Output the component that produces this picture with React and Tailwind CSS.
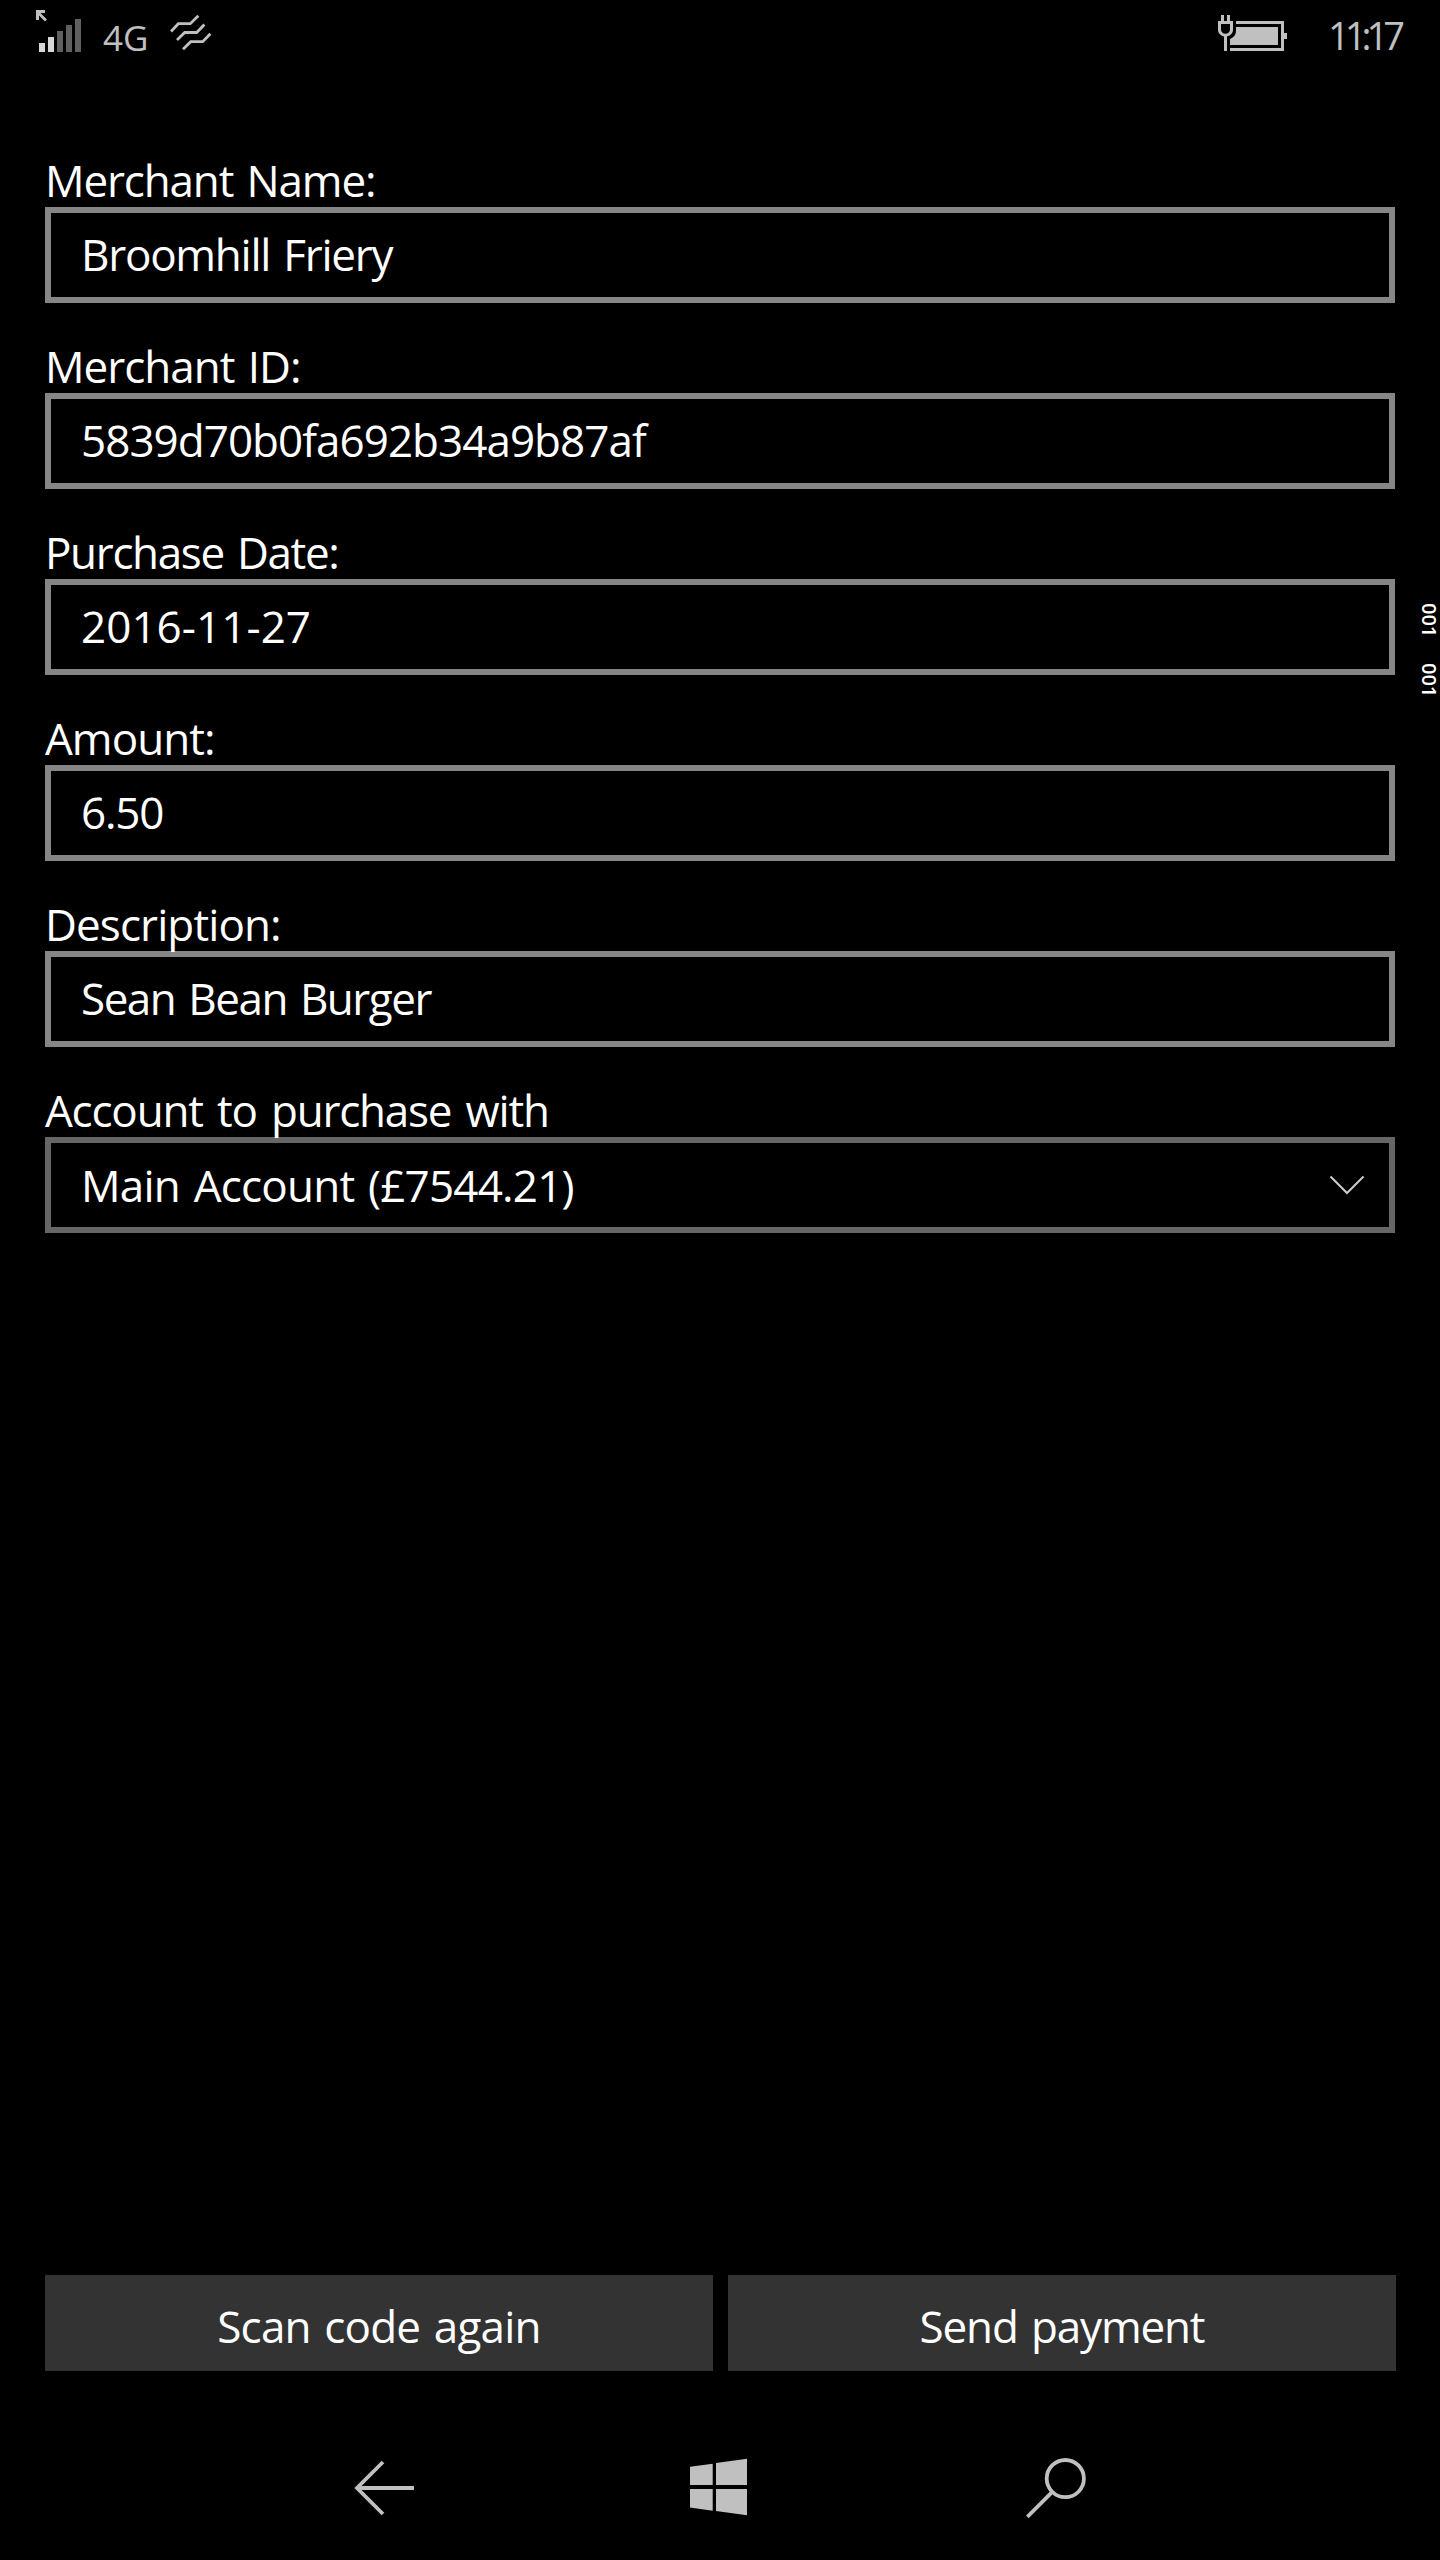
import React, { useState } from "react";

const initialFields = [
  {
    label: "Merchant Name:",
    value: "Broomhill Friery",
    labelClass: "tracking-[-1.15px]",
    valueClass: "tracking-[-1.25px]",
  },
  {
    label: "Merchant ID:",
    value: "5839d70b0fa692b34a9b87af",
    labelClass: "tracking-[-1.01px]",
    valueClass: "tracking-[-0.97px]",
  },
  {
    label: "Purchase Date:",
    value: "2016-11-27",
    labelClass: "tracking-[-1.35px]",
    valueClass: "tracking-[0.05px]",
  },
  {
    label: "Amount:",
    value: "6.50",
    labelClass: "tracking-[-0.95px]",
    valueClass: "tracking-[-1.2px]",
  },
  {
    label: "Description:",
    value: "Sean Bean Burger",
    labelClass: "tracking-[-0.9px]",
    valueClass: "tracking-[-1.48px]",
  },
];

const SignalIcon = () => (
  <svg width="46" height="44" viewBox="36 9 46 44">
    <path d="M36 10h9v3h-4.500l6.500 6.500-2 2-6-6V20h-3z" fill="#c0c0c0" />
    <path d="M39 43h6v9h-6zM48 37h6v15h-6z" fill="#d8d8d8" />
    <path d="M57 31h6v21h-6zM66 25h6v27h-6zM75 19h6v33h-6z" fill="#606060" />
  </svg>
);

const DataIcon = () => (
  <svg
    width="42"
    height="38"
    viewBox="170 14 42 38"
    fill="none"
    stroke="#c0c0c0"
    strokeWidth="2.8"
  >
    <path d="M171 31.500l7.300-7.800h12l8-8" />
    <path d="M177 40l7.700-7.500h12l7.700-8" />
    <path d="M183 49.200l7.700-7.500h12l7.700-8" />
  </svg>
);

const BatteryIcon = () => (
  <svg width="70" height="38" viewBox="1218 14 70 38" fill="#c0c0c0">
    <path d="M1221 15h3v6h3v-6h3v6h3v8.500c0 3.700-2.300 6-6 7V51h-3V36.500c-3.700-1-6-3.300-6-7V21h3z" />
    <path d="M1221 24h9v5.500c0 2.600-1.800 4.200-4.500 4.200s-4.500-1.600-4.500-4.200z" fill="#000" />
    <path d="M1236 21h48v12h3v6h-3v12h-54v-3h51V24h-45z" />
    <path d="M1236 27h42v18h-48v-6c4-1.500 6-4.500 6-8z" />
  </svg>
);

const StatusBar = () => (
  <header className="flex h-[72px] items-start justify-between pr-[33px] pl-9 text-[#c0c0c0]">
    <div className="flex items-start">
      <div className="pt-[9px]">
        <SignalIcon />
      </div>
      <span className="ml-[21px] w-[46px] pt-[13px] text-[35px] leading-[50px]">
        4G
      </span>
      <div className="ml-[21px] pt-[14px]">
        <DataIcon />
      </div>
    </div>
    <div className="flex items-start">
      <div className="pt-[14px]">
        <BatteryIcon />
      </div>
      <span className="ml-[40px] w-[79px] pt-[10px] text-[38px] leading-[50px] tracking-[-5px] whitespace-nowrap">
        11:17
      </span>
    </div>
  </header>
);

const Field = ({ label, value, labelClass, valueClass, onChange }) => (
  <label className="block">
    <span className={`block leading-[54px] ${labelClass}`}>{label}</span>
    <input
      className={`block h-24 w-full border-[6px] border-[#868686] bg-black pr-7 pb-[2px] pl-[30px] outline-none [word-spacing:3px] ${valueClass}`}
      value={value}
      onChange={onChange}
    />
  </label>
);

const NavBar = () => (
  <nav className="flex h-[144px] items-center pl-[353px] text-[#c0c0c0]">
    <button aria-label="Back">
      <svg
        width="62"
        height="60"
        viewBox="353 2458 62 60"
        fill="none"
        stroke="currentColor"
        strokeWidth="3.8"
      >
        <path d="M414 2488h-57.500M383 2462l-26 26 26 26" />
      </svg>
    </button>
    <button className="ml-[275px]" aria-label="Start">
      <svg width="58" height="60" viewBox="690 2457 58 60" fill="currentColor">
        <path d="M690 2465.800l22.700-3.100V2484H690zM716 2462l31-4.300V2484h-31zM690 2488h22.700v21.700l-22.700-3.200zM716 2488h31v26.300l-31-4.300z" />
      </svg>
    </button>
    <button className="ml-[278px]" aria-label="Search">
      <svg
        width="63"
        height="62"
        viewBox="1026 2457 63 62"
        fill="none"
        stroke="currentColor"
        strokeWidth="3.800"
      >
        <circle cx="1065.300" cy="2478.600" r="18.600" />
        <path d="M1052.300 2491.800l-25 25" />
      </svg>
    </button>
  </nav>
);

const App = () => {
  const [fields, setFields] = useState(initialFields);

  const updateField = (index, value) => {
    setFields(fields.map((f, i) => (i === index ? { ...f, value } : f)));
  };

  return (
    <div className="relative flex h-[2560px] w-[1440px] flex-col bg-black font-['Open_Sans',sans-serif] text-[44px] text-white">
      <StatusBar />

      <main className="flex flex-1 flex-col pt-[81px] pr-[44px] pl-[45px] [word-spacing:3px]">
        <div className="flex flex-col gap-9 pr-px">
          {fields.map((field, index) => (
            <Field
              key={field.label}
              {...field}
              onChange={(e) => updateField(index, e.target.value)}
            />
          ))}

          {/* Account picker */}
          <div>
            <span className="block leading-[54px] tracking-[-1.2px] [word-spacing:4px]">
              Account to purchase with
            </span>
            <button className="flex h-24 w-full items-center justify-between border-[6px] border-[#666666] pr-[24px] pl-[30px] text-left">
              <span className="leading-[84px] tracking-[-0.78px] [word-spacing:3px]">
                Main Account (£7544.21)
              </span>
              <svg
                width="36"
                height="20"
                viewBox="0 0 36 20"
                fill="none"
                stroke="#cccccc"
                strokeWidth="2"
              >
                <path d="M1.500 1.500L18 18 34.500 1.500" />
              </svg>
            </button>
          </div>
        </div>

        {/* Actions */}
        <div className="mt-auto mb-[45px] flex gap-[15px]">
          <button className="h-24 flex-1 bg-[#333333] pt-[6px] leading-[90px] tracking-[-0.81px] [word-spacing:3px]">
            Scan code again
          </button>
          <button className="h-24 flex-1 bg-[#333333] pt-[6px] leading-[90px] tracking-[-1.16px] [word-spacing:3px]">
            Send payment
          </button>
        </div>
      </main>

      <NavBar />

      {/* Frame counters over the right edge */}
      <div className="absolute top-[603px] right-0 flex gap-[26px] text-[20px] leading-[22px] font-semibold [writing-mode:vertical-rl]">
        <span>001</span>
        <span>001</span>
      </div>
    </div>
  );
};

export default App;
